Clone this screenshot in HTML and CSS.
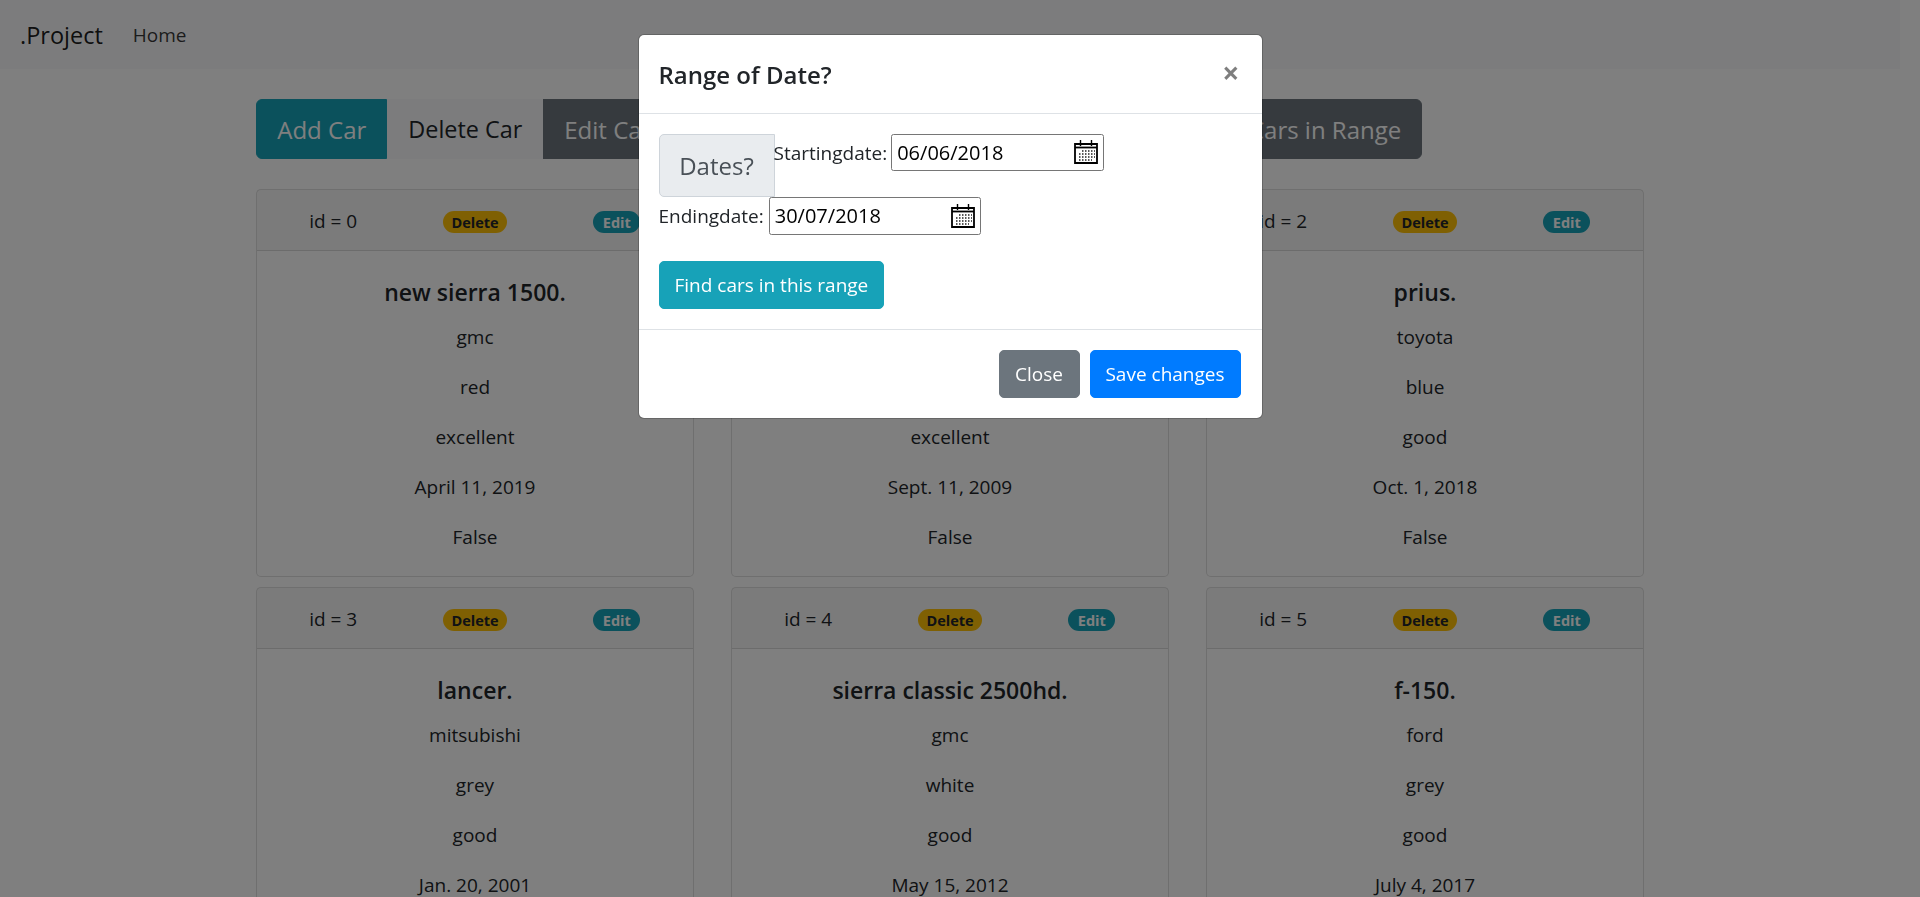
FILE: index.html
```html
<!DOCTYPE html>
<html lang="en">
<head>
  <meta charset="UTF-8">
  <meta name="viewport" content="width=device-width, initial-scale=1">
  <title>.Project</title>
  <link rel="stylesheet" href="styles.css">
</head>
<body>
  <nav class="navbar">
    <a class="brand" href="#">.Project</a>
    <a class="nav-link" href="#">Home</a>
  </nav>

  <div class="container">
    <div class="btn-group">
      <a class="btn btn-lg btn-info" href="#">Add Car</a>
      <a class="btn btn-lg btn-light" href="#">Delete Car</a>
      <a class="btn btn-lg btn-secondary" href="#">Edit Car</a>
      <a class="btn btn-lg btn-secondary btn-range" href="#">Find Cars in Range</a>
    </div>

    <div class="car-grid">
      <div class="card">
        <div class="card-header">
          <span>id = 0</span>
          <span><a class="badge badge-warning" href="#">Delete</a></span>
          <span><a class="badge badge-info" href="#">Edit</a></span>
        </div>
        <div class="card-body">
          <h5>new sierra 1500.</h5>
          <p>gmc</p>
          <p>red</p>
          <p>excellent</p>
          <p>April 11, 2019</p>
          <p>False</p>
        </div>
      </div>

      <div class="card">
        <div class="card-header">
          <span>id = 1</span>
          <span><a class="badge badge-warning" href="#">Delete</a></span>
          <span><a class="badge badge-info" href="#">Edit</a></span>
        </div>
        <div class="card-body">
          <h5>&nbsp;</h5>
          <p>&nbsp;</p>
          <p>&nbsp;</p>
          <p>excellent</p>
          <p>Sept. 11, 2009</p>
          <p>False</p>
        </div>
      </div>

      <div class="card">
        <div class="card-header">
          <span>id = 2</span>
          <span><a class="badge badge-warning" href="#">Delete</a></span>
          <span><a class="badge badge-info" href="#">Edit</a></span>
        </div>
        <div class="card-body">
          <h5>prius.</h5>
          <p>toyota</p>
          <p>blue</p>
          <p>good</p>
          <p>Oct. 1, 2018</p>
          <p>False</p>
        </div>
      </div>

      <div class="card">
        <div class="card-header">
          <span>id = 3</span>
          <span><a class="badge badge-warning" href="#">Delete</a></span>
          <span><a class="badge badge-info" href="#">Edit</a></span>
        </div>
        <div class="card-body">
          <h5>lancer.</h5>
          <p>mitsubishi</p>
          <p>grey</p>
          <p>good</p>
          <p>Jan. 20, 2001</p>
        </div>
      </div>

      <div class="card">
        <div class="card-header">
          <span>id = 4</span>
          <span><a class="badge badge-warning" href="#">Delete</a></span>
          <span><a class="badge badge-info" href="#">Edit</a></span>
        </div>
        <div class="card-body">
          <h5>sierra classic 2500hd.</h5>
          <p>gmc</p>
          <p>white</p>
          <p>good</p>
          <p>May 15, 2012</p>
        </div>
      </div>

      <div class="card">
        <div class="card-header">
          <span>id = 5</span>
          <span><a class="badge badge-warning" href="#">Delete</a></span>
          <span><a class="badge badge-info" href="#">Edit</a></span>
        </div>
        <div class="card-body">
          <h5>f-150.</h5>
          <p>ford</p>
          <p>grey</p>
          <p>good</p>
          <p>July 4, 2017</p>
        </div>
      </div>
    </div>
  </div>

  <div class="backdrop"></div>

  <div class="modal">
    <div class="modal-content">
      <div class="modal-header">
        <h5>Range of Date?</h5>
        <span class="close">×</span>
      </div>
      <div class="modal-body">
        <div class="date-row date-row-start">
          <span class="dates-label">Dates?</span>
          <span class="date-name">Startingdate:</span>
          <span class="date-input">
            <span>06/06/2018</span>
            <svg class="cal-icon" viewBox="0 0 24 24" width="24" height="24">
              <path d="M1 4h22v19H1z" fill="#fff" stroke="#000" stroke-width="1.8"/>
              <path d="M1 7.5h22" stroke="#000" stroke-width="1.8"/>
              <path d="M6.5 0v6M17.5 0v6" stroke="#000" stroke-width="1.4"/>
              <path d="M8 11h13M5 14h16M5 17h16M5 20h13" stroke="#222" stroke-width="1.5" stroke-dasharray="1.5 1.5" fill="none"/>
            </svg>
          </span>
        </div>
        <div class="date-row date-row-end">
          <span class="date-name">Endingdate:</span>
          <span class="date-input">
            <span>30/07/2018</span>
            <svg class="cal-icon" viewBox="0 0 24 24" width="24" height="24">
              <path d="M1 4h22v19H1z" fill="#fff" stroke="#000" stroke-width="1.8"/>
              <path d="M1 7.5h22" stroke="#000" stroke-width="1.8"/>
              <path d="M6.5 0v6M17.5 0v6" stroke="#000" stroke-width="1.4"/>
              <path d="M8 11h13M5 14h16M5 17h16M5 20h13" stroke="#222" stroke-width="1.5" stroke-dasharray="1.5 1.5" fill="none"/>
            </svg>
          </span>
        </div>
        <button class="btn btn-info">Find cars in this range</button>
      </div>
      <div class="modal-footer">
        <button class="btn btn-secondary btn-close">Close</button>
        <button class="btn btn-primary btn-save">Save changes</button>
      </div>
    </div>
  </div>
</body>
</html>
```

FILE: styles.css
```css
* { box-sizing: border-box; }
html, body { height: 100%; overflow: hidden; }
body { margin: 0; padding-right: 20px; background: #fff; color: #212529; font-family: "Open Sans", "Noto Sans", sans-serif; font-size: 19px; line-height: 30px; }
a { text-decoration: none; color: inherit; }

/* top bar */
.navbar { display: flex; align-items: center; height: 68.75px; padding: 0 20px; background: #f8f9fa; }
.brand { padding-top: 3px; font-size: 23.5px; line-height: 37.5px; margin-right: 30px; color: rgba(0,0,0,0.9); }
.nav-link { padding-top: 1px; color: rgba(0,0,0,0.8); }

.container { width: 1425px; margin: 30.25px auto 0; padding: 0 18.75px; }

/* buttons */
.btn { display: inline-block; padding: 8.5px 15px 7.5px; border: 1.25px solid transparent; border-radius: 5px; font: inherit; line-height: 30px; text-align: center; color: #fff; }
.btn-lg { padding: 11px 20px 9px; font-size: 24px; line-height: 37.5px; border-radius: 0; }
.btn-info { background: #17a2b8; border-color: #17a2b8; }
.btn-light { background: #f8f9fa; border-color: #f8f9fa; color: #212529; font-size: 23.4px; }
.btn-secondary { background: #6c757d; border-color: #6c757d; }
.btn-primary { background: #007bff; border-color: #007bff; }
.btn-close { width: 81px; padding-left: 0; padding-right: 0; }
.btn-save { width: 151px; padding-left: 0; padding-right: 0; }

.btn-group { display: flex; width: 1166px; margin-bottom: 30px; }
.btn-group .btn:first-child { border-radius: 6px 0 0 6px; }
.btn-group .btn:last-child { border-radius: 0 6px 6px 0; }
.btn-range { flex: 1; text-align: right; }

/* car cards */
.car-grid { display: grid; grid-template-columns: repeat(3, 1fr); column-gap: 37.5px; row-gap: 10px; }
.card { border: 1.25px solid rgba(0,0,0,0.125); border-radius: 5px; text-align: center; background: #fff; }
.card-header { display: grid; grid-template-columns: repeat(3, 1fr); padding: 16px 5px 14px; background: rgba(0,0,0,0.03); border-bottom: 1.25px solid rgba(0,0,0,0.125); }
.card-body { padding: 26px 25px 24px; }
.card-body h5 { margin: 0 0 15px; font-size: 23px; font-weight: 600; line-height: 30px; }
.card-body p { margin: 0 0 20px; }
.card-body p:last-child { margin-bottom: 0; }

.badge { display: inline-block; padding: 3.75px 8.5px; border-radius: 12px; font-size: 14.5px; font-weight: 700; line-height: 15px; vertical-align: baseline; }
.badge-warning { background: #ffc107; color: #212529; }
.badge-info { padding: 3.75px 9.5px; background: #17a2b8; color: #fff; }

/* modal */
.backdrop { position: fixed; inset: 0; background: rgba(0,0,0,0.5); }
.modal { position: fixed; top: 0; left: 0; right: 20px; bottom: 0; padding-top: 34px; }
.modal-content { width: 625px; margin: 0 auto; background: #fff; border: 1.25px solid rgba(0,0,0,0.2); border-radius: 6px; background-clip: padding-box; }
.modal-header { display: flex; justify-content: space-between; align-items: flex-start; padding: 21px 20px 19px; border-bottom: 1.25px solid #dee2e6; }
.modal-header h5 { margin: 0; font-size: 24px; font-weight: 600; line-height: 37.5px; }
.close { margin: 2px 2px 0 0; font-size: 30px; font-weight: 700; line-height: 30px; color: #000; opacity: 0.5; }
.modal-body { padding: 20px; }
.modal-footer { display: flex; justify-content: flex-end; gap: 10px; padding: 20px 21px 20px 20px; border-top: 1.25px solid #dee2e6; }

/* date fields */
.date-row { display: flex; align-items: flex-start; line-height: 37.5px; }
.date-row-start { gap: 4px; }
.date-row-end { gap: 5px; margin-bottom: 25.5px; }
.date-name { padding-top: 1px; }
.dates-label { width: 116px; height: 63px; margin-right: -5px; padding: 12px 0 10px; background: #e9ecef; border: 1.25px solid #ced4da; border-radius: 5px 0 0 5px; font-size: 24px; line-height: 37.5px; text-align: center; color: #495057; }
.date-input { display: flex; align-items: center; justify-content: space-between; width: 212.5px; height: 37.5px; padding: 0 5px; border: 1.25px solid #767676; border-radius: 2.5px; background: #fff; color: #000; font-size: 20px; }
.date-row-end .date-input { height: 38px; }
.date-input span { padding-top: 1px; }
.cal-icon { display: block; }
```
